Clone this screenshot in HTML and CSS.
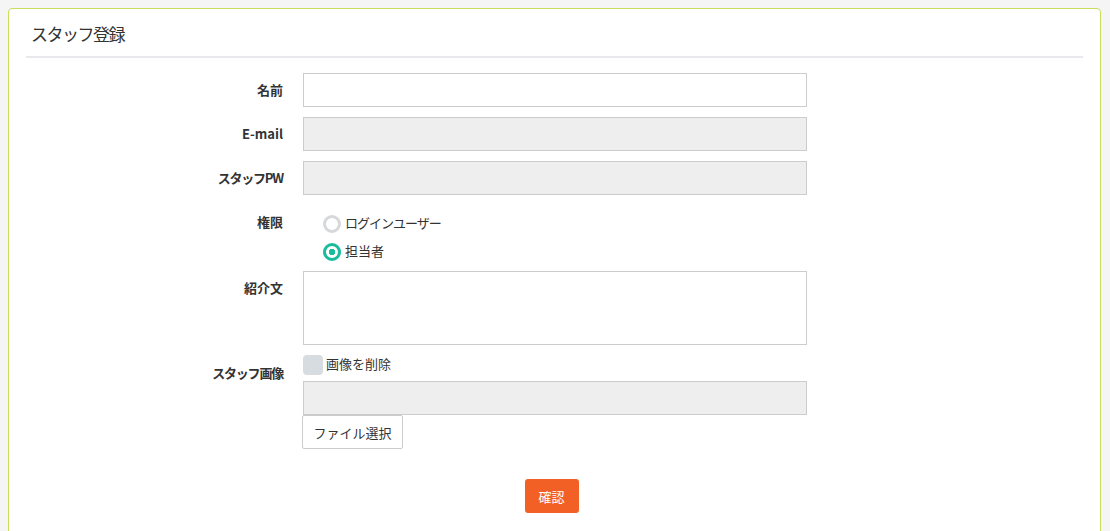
FILE: index.html
```html
<!DOCTYPE html>
<html lang="ja">
<head>
<meta charset="utf-8">
<link rel="stylesheet" href="styles.css">
</head>
<body>
<div class="card">
  <div class="card-head"><h1 class="title">スタッフ登録</h1></div>
  <form class="form">
    <div class="row">
      <label class="lbl">名前</label>
      <div class="field"><input class="inp" type="text"></div>
    </div>
    <div class="row">
      <label class="lbl">E-mail</label>
      <div class="field"><input class="inp dis" type="text" disabled></div>
    </div>
    <div class="row">
      <label class="lbl kana">スタッフPW</label>
      <div class="field"><input class="inp dis" type="text" disabled></div>
    </div>
    <div class="row row-radio">
      <label class="lbl">権限</label>
      <div class="field radios">
        <div class="radio"><span class="ring"></span><span class="rtext kana">ログインユーザー</span></div>
        <div class="radio"><span class="ring on"></span><span class="rtext">担当者</span></div>
      </div>
    </div>
    <div class="row">
      <label class="lbl">紹介文</label>
      <div class="field"><textarea class="ta"></textarea></div>
    </div>
    <div class="row row-img">
      <label class="lbl lbl-img kana">スタッフ画像</label>
      <div class="field">
        <div class="check"><span class="box"></span><span class="ctext">画像を削除</span></div>
        <input class="inp dis" type="text" disabled>
        <button type="button" class="filebtn">ファイル選択</button>
      </div>
    </div>
    <div class="actions"><button type="button" class="submit">確認</button></div>
  </form>
</div>
</body>
</html>
```
FILE: styles.css
```css
html, body { margin: 0; padding: 0; }
body {
  background: #f5f5f5;
  font-family: "Noto Sans CJK JP", "Liberation Sans", sans-serif;
  color: #333;
  padding: 8px 9px 0 8px;
  height: 531px;
  box-sizing: border-box;
  overflow: hidden;
}
.card {
  background: #fff;
  border: 1px solid #c7df5c;
  border-radius: 4px 4px 0 0;
  height: 560px;
  padding: 0 17px;
}
.card-head {
  border-bottom: 2px solid #e7e9ed;
  height: 49px;
  box-sizing: border-box;
}
.title {
  margin: 0;
  padding: 13px 0 0 5px;
  font-size: 17px;
  font-weight: normal;
  line-height: 24px;
  color: #333;
  letter-spacing: -1.5px;
}
.form {
  padding-top: 15px;
  margin-left: -17px;
}
.row {
  display: grid;
  grid-template-columns: 274px 504px;
  column-gap: 20px;
  margin-bottom: 10px;
}
.lbl {
  text-align: right;
  font-size: 13px;
  font-weight: bold;
  line-height: 20px;
  padding-top: 7px;
  color: #333;
}
.lbl.kana { letter-spacing: -1.2px; }
.inp {
  display: block;
  width: 504px;
  height: 34px;
  box-sizing: border-box;
  border: 1px solid #ccc;
  background: #fff;
  margin: 0;
  font-family: inherit;
}
.inp.dis { background: #eee; }
.row-radio { margin-bottom: 10px; }
.row-radio .lbl { padding-top: 7px; }
.radios { padding: 10px 0 0 20px; }
.radio {
  display: flex;
  align-items: center;
  height: 18px;
  margin-bottom: 10px;
  font-size: 13px;
}
.radio:last-child { margin-bottom: 0; }
.ring {
  width: 18px;
  height: 18px;
  box-sizing: border-box;
  border-radius: 50%;
  border: 3px solid #d5d9dc;
  background: #fff;
  margin-right: 4px;
  flex: none;
}
.ring.on {
  border-color: #1abc9c;
  background: radial-gradient(circle, #1abc9c 0 3px, #fff 3.5px);
}
.rtext { line-height: 18px; margin-top: -3px; }
.rtext.kana { letter-spacing: -1px; }
.ta {
  display: block;
  width: 504px;
  height: 74px;
  box-sizing: border-box;
  border: 1px solid #ccc;
  margin: 0;
  resize: none;
  font-family: inherit;
}
.row-img .lbl-img { padding-top: 8px; }
.check {
  display: flex;
  align-items: center;
  height: 20px;
  margin: 0 0 6px;
  font-size: 13px;
}
.box {
  width: 20px;
  height: 20px;
  border-radius: 4px;
  background: #d7dce0;
  margin-right: 3px;
}
.ctext { margin-top: -3px; }
.filebtn {
  display: block;
  margin: 0 0 0 -1px;
  width: 101px;
  height: 34px;
  border: 1px solid #ccc;
  border-radius: 2px;
  background: #fff;
  color: #333;
  font-family: inherit;
  font-size: 13px;
  padding: 0;
}
.actions {
  width: 1091px;
  display: flex;
  justify-content: center;
  padding-top: 20px;
}
.submit {
  width: 54px;
  height: 34px;
  border: none;
  border-radius: 3px;
  background: #f36026;
  color: #fff;
  font-family: inherit;
  font-size: 13px;
  padding: 0;
  margin-left: -6px;
}
```
